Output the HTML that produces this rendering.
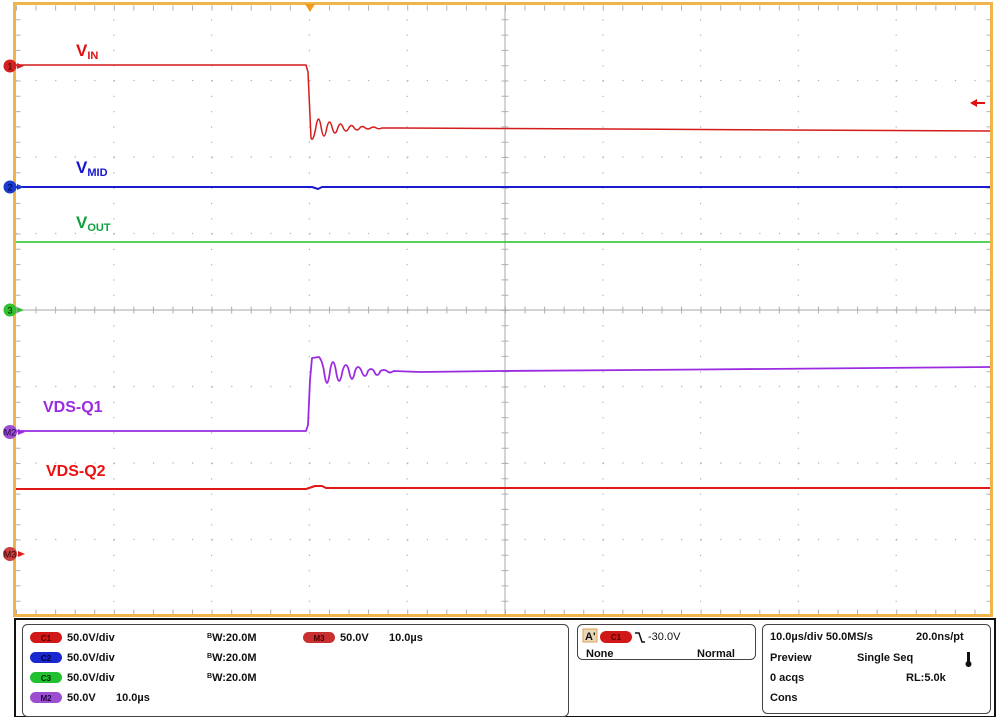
<!DOCTYPE html>
<html><head><meta charset="utf-8"><style>
html,body{margin:0;padding:0;background:#fff;width:1000px;height:717px;overflow:hidden}
svg{display:block}
text{font-family:"Liberation Sans",Arial,sans-serif}
</style></head><body>
<svg width="1000" height="717" viewBox="0 0 1000 717" xmlns="http://www.w3.org/2000/svg">
<rect width="1000" height="717" fill="#fff"/>
<!-- grid dots -->
<g stroke="#b0b0b0" stroke-width="1.2">
<g stroke-dasharray="1.2 18.36">
<line x1="16" y1="80.5" x2="992" y2="80.5"/>
<line x1="16" y1="157" x2="992" y2="157"/>
<line x1="16" y1="233.5" x2="992" y2="233.5"/>
<line x1="16" y1="386.5" x2="992" y2="386.5"/>
<line x1="16" y1="463" x2="992" y2="463"/>
<line x1="16" y1="539.5" x2="992" y2="539.5"/>
</g>
<g stroke-dasharray="1.2 14.1">
<line x1="113.8" y1="4" x2="113.8" y2="616"/>
<line x1="211.6" y1="4" x2="211.6" y2="616"/>
<line x1="309.4" y1="4" x2="309.4" y2="616"/>
<line x1="407.2" y1="4" x2="407.2" y2="616"/>
<line x1="603" y1="4" x2="603" y2="616"/>
<line x1="700.6" y1="4" x2="700.6" y2="616"/>
<line x1="798.4" y1="4" x2="798.4" y2="616"/>
<line x1="896.2" y1="4" x2="896.2" y2="616"/>
</g>
</g>
<!-- center cross -->
<g stroke="#a8a8a8" stroke-width="1">
<line x1="505" y1="4" x2="505" y2="616"/>
<line x1="16" y1="310" x2="992" y2="310"/>
</g>
<g stroke="#b0b0b0" fill="none">
<line x1="16" y1="310" x2="992" y2="310" stroke-dasharray="1 18.56" stroke-width="7"/>
<line x1="505" y1="4" x2="505" y2="616" stroke-dasharray="1 14.3" stroke-width="7"/>
<line x1="16" y1="8" x2="992" y2="8" stroke-dasharray="1 18.56" stroke-width="5"/>
<line x1="16" y1="612" x2="992" y2="612" stroke-dasharray="1 18.56" stroke-width="5"/>
<line x1="18" y1="4" x2="18" y2="616" stroke-dasharray="1 14.3" stroke-width="5"/>
<line x1="989" y1="4" x2="989" y2="616" stroke-dasharray="1 14.3" stroke-width="5"/>
</g>
<!-- frame -->
<rect x="14.5" y="3.5" width="977" height="612" fill="none" stroke="#f0b54a" stroke-width="3"/>
<polygon points="305,4 315,4 310,12" fill="#f29a1a"/>
<!-- traces -->
<g fill="none" stroke-linejoin="round" stroke-width="1.5">
<path stroke="#d41c1c" d="M16,65 L306,65 L308,72 L311,138 Q313,143 315.75,128 Q318.5,110 321.25,128 Q324,144 326.75,128 Q329.5,116 332.25,128 Q335,138 337.75,128 Q340.5,120 343.25,128 Q346,134 348.75,128 Q351.5,123 354.25,128 Q357,132 359.75,128 Q362.5,125 365.25,128 Q368,130 370.75,128 Q373.5,126 376.25,128 Q379,129.4 381.75,128 L400,128 L500,128.5 L700,129.5 L990,131"/>
<path stroke="#1a1ad0" stroke-width="2" d="M16,187 L312,187 L318,189 L322,187 L990,187"/>
<path stroke="#22c022" stroke-width="1.6" d="M16,242 L990,242"/>
<path stroke="#9b2be0" stroke-width="1.8" d="M16,431 L306,431 L308,425 L310,380 L312,358 L319,357 Q322,360 324,371 Q327,395 330,371 Q333,353 336,371 Q339,391 342.5,371 Q346,359 349,371 Q352,387 355,371 Q358,363 361.5,371 Q365,381 368,371 Q371,367 374,371 Q377,379 380.5,371 Q384,369 387,371 Q390,374 393.5,371 L420,372 L500,371 L700,369.5 L990,367"/>
<path stroke="#e01818" stroke-width="2" d="M16,489 L306,489 L315,486 L322,486 L326,488 L990,488"/>
</g>
<!-- labels -->
<g font-weight="bold">
<text x="76" y="56" font-size="17" fill="#e01010">V<tspan font-size="11" dy="3">IN</tspan></text>
<text x="76" y="173" font-size="17" fill="#1515d0">V<tspan font-size="11" dy="3">MID</tspan></text>
<text x="76" y="228" font-size="17" fill="#10a040">V<tspan font-size="11" dy="3">OUT</tspan></text>
<text x="43" y="412" font-size="16" fill="#9b2be0">VDS-Q1</text>
<text x="46" y="476" font-size="16" fill="#ee1010">VDS-Q2</text>
</g>
<!-- channel markers -->
<g font-size="9" text-anchor="middle">
<circle cx="10" cy="66" r="6.5" fill="#d42020"/><text x="10" y="69.5" fill="#400">1</text>
<polygon points="17,63 24,66 17,69" fill="#d42020"/>
<circle cx="10" cy="187" r="6.5" fill="#1a3ad0"/><text x="10" y="190.5" fill="#002">2</text>
<polygon points="17,184 24,187 17,190" fill="#1a3ad0"/>
<circle cx="10" cy="310" r="6.5" fill="#30c030"/><text x="10" y="313.5" fill="#020">3</text>
<polygon points="17,307 24,310 17,313" fill="#30c030"/>
<circle cx="10" cy="432" r="7" fill="#9b4fd0"/><text x="10" y="435.5" fill="#204">M2</text>
<polygon points="18,429 25,432 18,435" fill="#9b2be0"/>
<circle cx="10" cy="554" r="7" fill="#c84040"/><text x="10" y="557.5" fill="#300">M3</text>
<polygon points="18,551 25,554 18,557" fill="#e02020"/>
</g>
<polygon points="970,103 977,99 977,107" fill="#e01010"/><line x1="975" y1="103" x2="985" y2="103" stroke="#e01010" stroke-width="2"/>
<!-- bottom panel -->
<rect x="15" y="619" width="980" height="98" fill="#fff" stroke="#111" stroke-width="2"/>
<rect x="22.5" y="624.5" width="546" height="92" rx="5" fill="none" stroke="#444"/>
<rect x="577.5" y="624.5" width="178" height="35" rx="5" fill="none" stroke="#444"/>
<rect x="762.5" y="624.5" width="228" height="89" rx="5" fill="none" stroke="#444"/>
<g font-size="11" font-weight="bold" fill="#111">
<rect x="30" y="632" width="32" height="11" rx="5.5" fill="#d01818"/><text x="46" y="641" font-size="8" text-anchor="middle" fill="#500">C1</text>
<rect x="30" y="652" width="32" height="11" rx="5.5" fill="#1a28d0"/><text x="46" y="661" font-size="8" text-anchor="middle" fill="#002">C2</text>
<rect x="30" y="672" width="32" height="11" rx="5.5" fill="#20c030"/><text x="46" y="681" font-size="8" text-anchor="middle" fill="#020">C3</text>
<rect x="30" y="692" width="32" height="11" rx="5.5" fill="#9b4fd0"/><text x="46" y="701" font-size="8" text-anchor="middle" fill="#204">M2</text>
<rect x="303" y="632" width="32" height="11" rx="5.5" fill="#c83030"/><text x="319" y="641" font-size="8" text-anchor="middle" fill="#400">M3</text>
<text x="67" y="641">50.0V/div</text>
<text x="67" y="661">50.0V/div</text>
<text x="67" y="681">50.0V/div</text>
<text x="67" y="701">50.0V</text><text x="116" y="701">10.0µs</text>
<text x="207" y="641"><tspan font-size="7" dy="-3">B</tspan><tspan dy="3">W:20.0M</tspan></text>
<text x="207" y="661"><tspan font-size="7" dy="-3">B</tspan><tspan dy="3">W:20.0M</tspan></text>
<text x="207" y="681"><tspan font-size="7" dy="-3">B</tspan><tspan dy="3">W:20.0M</tspan></text>
<text x="340" y="641">50.0V</text><text x="389" y="641">10.0µs</text>
<rect x="583" y="629" width="14" height="13" fill="#e8d8b8" stroke="#e0a050"/><text x="585" y="640">A'</text>
<rect x="600" y="631" width="32" height="12" rx="6" fill="#d01818"/><text x="616" y="640" font-size="8" text-anchor="middle" fill="#500">C1</text>
<path d="M635,633 L639,633 L642,642 L645,642" fill="none" stroke="#111" stroke-width="1.5"/>
<text x="648" y="640" font-weight="normal">-30.0V</text>
<text x="586" y="657">None</text><text x="697" y="657">Normal</text>
<text x="770" y="640">10.0µs/div  50.0MS/s</text><text x="916" y="640">20.0ns/pt</text>
<text x="770" y="661">Preview</text><text x="857" y="661">Single Seq</text>
<text x="770" y="681">0 acqs</text><text x="906" y="681">RL:5.0k</text>
<text x="770" y="701">Cons</text>
<rect x="967" y="652" width="3" height="11" fill="#111"/><circle cx="968.5" cy="664" r="3" fill="#111"/>
</g>
</svg>
</body></html>
